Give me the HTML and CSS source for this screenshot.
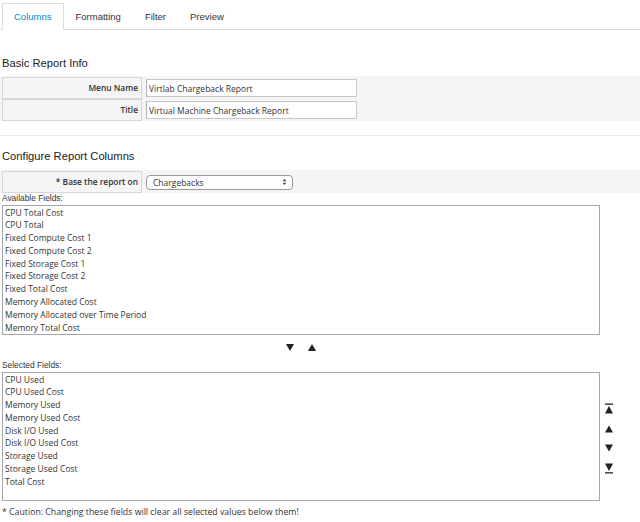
FILE: index.html
```html
<!DOCTYPE html>
<html lang="en">
<head>
    <meta charset="UTF-8">
    <title>Edit Report</title>
    <link rel="stylesheet" href="styles.css">
</head>
<body>
    <ul class="tabs">
        <li class="active"><a>Columns</a></li>
        <li><a>Formatting</a></li>
        <li><a>Filter</a></li>
        <li><a>Preview</a></li>
    </ul>

    <h3 class="section-title">Basic Report Info</h3>
    <div class="form-rows">
        <div class="form-row">
            <label class="form-label">Menu Name</label>
            <input class="form-input" type="text" value="Virtlab Chargeback Report">
        </div>
        <div class="form-row">
            <label class="form-label">Title</label>
            <input class="form-input" type="text" value="Virtual Machine Chargeback Report">
        </div>
    </div>

    <hr class="divider">

    <h3 class="section-title second">Configure Report Columns</h3>
    <div class="form-rows">
        <div class="form-row">
            <label class="form-label">* Base the report on</label>
            <div class="fake-select">
                <span>Chargebacks</span>
                <svg class="select-arrows" width="5" height="8" viewBox="0 0 5 8"><path d="M0.6 3.2H4.4L2.5 0.9Z M0.6 4.8H4.4L2.5 7.1Z" fill="#444"/></svg>
            </div>
        </div>
    </div>

    <div class="field-caption">Available Fields:</div>
    <div class="field-list available">
        <div>CPU Total Cost</div>
        <div>CPU Total</div>
        <div>Fixed Compute Cost 1</div>
        <div>Fixed Compute Cost 2</div>
        <div>Fixed Storage Cost 1</div>
        <div>Fixed Storage Cost 2</div>
        <div>Fixed Total Cost</div>
        <div>Memory Allocated Cost</div>
        <div>Memory Allocated over Time Period</div>
        <div>Memory Total Cost</div>
    </div>

    <div class="move-buttons">
        <svg width="8" height="7" viewBox="0 0 8 7"><path d="M0 0H8L4 7Z" fill="#222"/></svg>
        <svg width="8" height="7" viewBox="0 0 8 7"><path d="M0 7H8L4 0Z" fill="#222"/></svg>
    </div>

    <div class="field-caption">Selected Fields:</div>
    <div class="selected-row">
        <div class="field-list selected">
            <div>CPU Used</div>
            <div>CPU Used Cost</div>
            <div>Memory Used</div>
            <div>Memory Used Cost</div>
            <div>Disk I/O Used</div>
            <div>Disk I/O Used Cost</div>
            <div>Storage Used</div>
            <div>Storage Used Cost</div>
            <div>Total Cost</div>
        </div>
        <div class="order-buttons">
            <svg width="10" height="12" viewBox="0 0 10 12"><rect x="1" y="0.5" width="8" height="1.3" fill="#222"/><path d="M1 10.5H9L5 3Z" fill="#222"/></svg>
            <svg width="10" height="12" viewBox="0 0 10 12"><path d="M1 9.5H9L5 2.5Z" fill="#222"/></svg>
            <svg width="10" height="12" viewBox="0 0 10 12"><path d="M1 2.5H9L5 9.5Z" fill="#222"/></svg>
            <svg width="10" height="12" viewBox="0 0 10 12"><path d="M1 1.5H9L5 9Z" fill="#222"/><rect x="1" y="10.2" width="8" height="1.3" fill="#222"/></svg>
        </div>
    </div>

    <p class="caution">* Caution: Changing these fields will clear all selected values below them!</p>
</body>
</html>
```

FILE: styles.css
```css
body {
    margin: 0;
    padding: 0;
    background-color: #fff;
    color: #333;
    font-family: "Open Sans", sans-serif;
    font-size: 8.5px;
}
.tabs {
    display: flex;
    list-style: none;
    margin: 0;
    padding: 3px 0 0 2px;
    border-bottom: 1px solid #ddd;
}
.tabs a {
    display: block;
    padding: 1px 11px 0;
    line-height: 24px;
    border: 1px solid transparent;
    border-bottom: none;
    font-family: "Liberation Sans", Arial, sans-serif;
    font-size: 9.5px;
    color: #333;
}
.tabs .active a {
    color: #0088ce;
    background-color: #fff;
    border-color: #ddd;
    border-bottom: 1px solid #fff;
    margin-bottom: -1px;
}
.section-title {
    font-family: "Liberation Sans", Arial, sans-serif;
    font-size: 11.2px;
    font-weight: normal;
    line-height: 14px;
    color: #222;
    margin: 26px 0 6px 2px;
}
.section-title.second {
    margin-top: 13px;
    margin-bottom: 7px;
}
.form-rows {
    background-color: #f5f5f5;
    padding: 1px 0 0;
}
.form-row {
    display: flex;
    align-items: center;
    height: 22px;
}
.form-label {
    box-sizing: border-box;
    width: 140px;
    height: 22px;
    margin-left: 2px;
    padding-right: 3px;
    border: 1px solid #d6d6d6;
    text-align: right;
    line-height: 19px;
    font-weight: 600;
    font-size: 8.4px;
    color: #333;
}
.form-input {
    box-sizing: border-box;
    width: 211px;
    height: 18px;
    margin: 0 0 0 4px;
    padding: 1px 2px 0;
    border: 1px solid #c8c8c8;
    border-left-color: #b0b0b0;
    background-color: #fff;
    font-family: "Open Sans", sans-serif;
    font-size: 8.5px;
    color: #333;
    outline: none;
}
.divider {
    border: 0;
    border-top: 1px solid #ececec;
    margin: 14px 0 0;
}
.fake-select {
    box-sizing: border-box;
    display: flex;
    justify-content: space-between;
    align-items: center;
    width: 147px;
    height: 15px;
    margin-left: 4px;
    padding: 0 5px 0 6px;
    border: 1px solid #9a9a9a;
    border-radius: 4px;
    background-color: #fff;
    font-size: 8.5px;
}
.field-caption {
    font-family: "Liberation Sans", Arial, sans-serif;
    font-size: 8.4px;
    line-height: 11px;
    margin: 0 0 1px 2px;
    color: #333;
}
.field-list {
    box-sizing: border-box;
    width: 598px;
    margin-left: 2px;
    padding-left: 2px;
    padding-top: 0.5px;
    border: 1px solid #a6a6a6;
    background-color: #fff;
    line-height: 12.8px;
    overflow: hidden;
}
.available {
    height: 130px;
}
.selected {
    height: 129px;
}
.move-buttons {
    display: flex;
    justify-content: center;
    align-items: center;
    gap: 14.5px;
    width: 598px;
    margin-left: 2px;
    height: 25px;
}
.move-buttons svg,
.order-buttons svg {
    display: block;
}
.selected-row {
    display: flex;
}
.order-buttons {
    display: flex;
    flex-direction: column;
    gap: 7.5px;
    margin-left: 4px;
    padding-top: 31px;
}
.caution {
    margin: 6px 0 0 2px;
    line-height: 11px;
    font-size: 8.75px;
}
```
